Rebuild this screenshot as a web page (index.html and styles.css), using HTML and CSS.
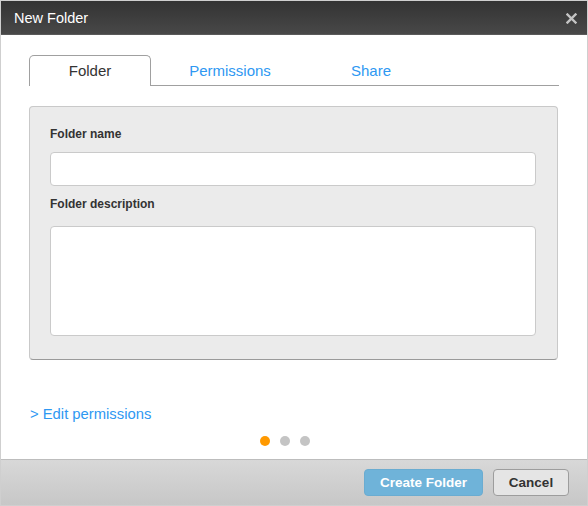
FILE: index.html
```html
<!DOCTYPE html>
<html>
<head>
<meta charset="utf-8">
<link rel="stylesheet" href="styles.css">
</head>
<body>
<div class="dialog">
  <div class="titlebar">
    <span class="title">New Folder</span>
    <svg class="close" width="11" height="11" viewBox="0 0 11 11"><path d="M1.5 1.5 L9.5 9.5 M9.5 1.5 L1.5 9.5" stroke="#c4c4c4" stroke-width="2.4" stroke-linecap="square"/></svg>
  </div>
  <div class="content">
    <div class="tabs">
      <div class="tab active">Folder</div>
      <div class="tab">Permissions</div>
      <div class="tab">Share</div>
    </div>
    <div class="panel">
      <label class="label">Folder name</label>
      <div class="input"></div>
      <label class="label second">Folder description</label>
      <div class="textarea"></div>
    </div>
    <div class="edit">&gt; Edit permissions</div>
    <div class="dots">
      <span class="dot on"></span>
      <span class="dot"></span>
      <span class="dot"></span>
    </div>
  </div>
  <div class="footer">
    <button class="btn primary">Create Folder</button>
    <button class="btn cancel">Cancel</button>
  </div>
</div>
</body>
</html>
```
FILE: styles.css
```css
* { box-sizing: border-box; }
html, body { margin: 0; padding: 0; background: #fff; }
body { font-family: "Liberation Sans", Arial, sans-serif; }
.dialog {
  width: 588px;
  height: 506px;
  border: 1px solid #cfcfcf;
  display: flex;
  flex-direction: column;
  background: #fff;
}
.titlebar {
  height: 34px;
  background: linear-gradient(#333333, #484848);
  border-bottom: 1px solid #5a5a5a;
  display: flex;
  align-items: center;
  justify-content: space-between;
  padding: 0 10px 0 13px;
}
.title { color: #fff; font-size: 14.5px; }
.close { display: block; margin-top: 1px; }
.content {
  flex: 1;
  padding: 20px 28px 0 28px;
}
.tabs {
  display: flex;
  height: 31px;
  border-bottom: 1px solid #a0a0a0;
}
.tab {
  width: 122px;
  margin-right: 19px;
  text-align: center;
  font-size: 15px;
  color: #2e98f2;
  line-height: 30px;
  padding-top: 1px;
}
.tab.active {
  color: #333;
  border: 1px solid #a0a0a0;
  border-bottom: none;
  border-radius: 5px 5px 0 0;
  background: #fff;
  height: 31px;
  margin-bottom: -1px;
  margin-right: 18px;
  padding-top: 0;
}
.panel {
  margin-top: 20px;
  margin-right: 1px;
  background: #ebebeb;
  border: 1px solid #c9c9c9;
  border-bottom-color: #9a9a9a;
  border-radius: 4px;
  padding: 20px 21px 23px 20px;
}
.label {
  display: block;
  font-size: 12px;
  font-weight: bold;
  color: #333;
  line-height: 14px;
}
.label.second { margin-top: 11px; }
.input {
  margin-top: 11px;
  height: 34px;
  background: #fff;
  border: 1px solid #cacaca;
  border-radius: 4px;
}
.textarea {
  margin-top: 15px;
  height: 110px;
  background: #fff;
  border: 1px solid #cacaca;
  border-radius: 4px;
}
.edit {
  margin-top: 45px;
  font-size: 14.8px;
  line-height: 18px;
  color: #2e98f2;
  padding-left: 1px;
}
.dots {
  display: flex;
  justify-content: center;
  gap: 10px;
  margin-top: 13px;
  padding-right: 19px;
}
.dot {
  width: 10px;
  height: 10px;
  border-radius: 50%;
  background: #c4c4c4;
}
.dot.on { background: #ff9900; }
.footer {
  height: 46px;
  border-top: 1px solid #bdbdbd;
  background: linear-gradient(#d8d8d8, #c7c7c7);
  display: flex;
  justify-content: flex-end;
  align-items: flex-start;
  gap: 10px;
  padding: 9px 18px 0 0;
}
.btn {
  height: 27px;
  font-family: "Liberation Sans", Arial, sans-serif;
  font-size: 13.5px;
  font-weight: bold;
  border-radius: 4px;
  padding: 0;
}
.btn.primary {
  width: 119px;
  background: #6fb3d9;
  border: 1px solid #6aacd1;
  color: #fff;
}
.btn.cancel {
  width: 76px;
  background: #e5e5e5;
  border: 1px solid #9d9d9d;
  color: #333;
}
```
